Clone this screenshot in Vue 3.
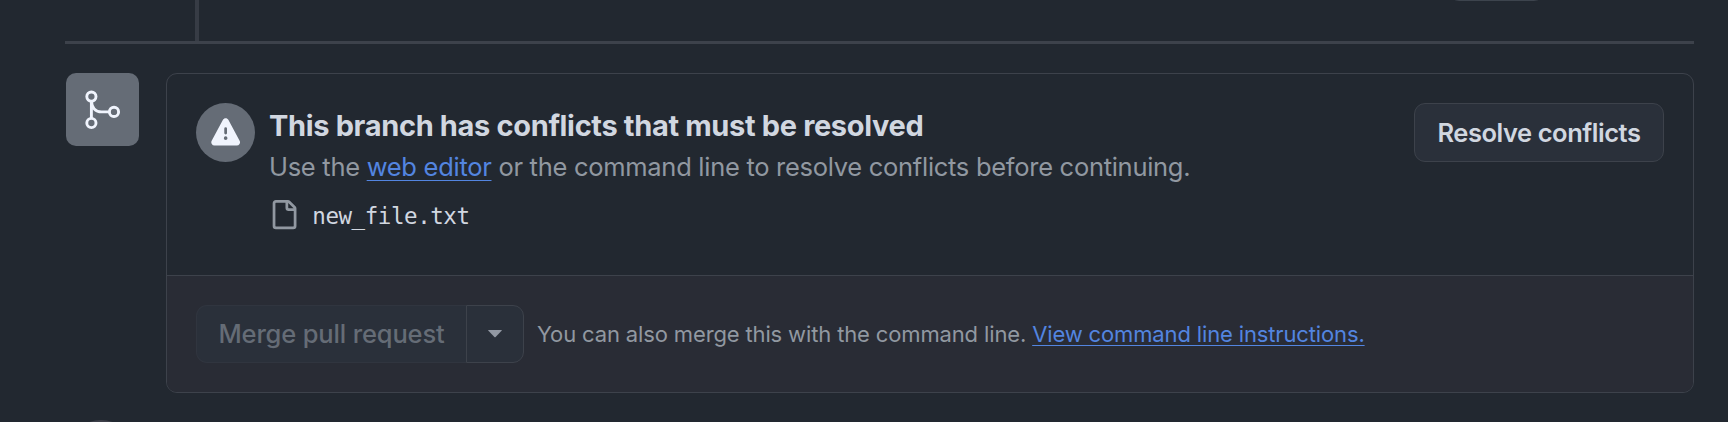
<script setup>
const file = 'new_file.txt'
</script>

<template>
  <main class="page">
    <div class="timeline">
      <span class="rail"></span>
      <span class="pill"></span>
    </div>
    <div class="row">
      <div class="tile">
        <svg viewBox="0 0 73 73" fill="none" stroke="#f0f4fd" stroke-width="2.9">
          <circle cx="25.4" cy="23.6" r="4.6" />
          <circle cx="25.4" cy="50" r="4.6" />
          <circle cx="48" cy="38.9" r="4.6" />
          <path d="M25.4 28.3V45.3M25.4 28.3C25.9 34.6 29.4 38.9 35.5 38.9H43.3" />
        </svg>
      </div>
      <section class="card">
        <div class="status">
          <div class="badge">
            <svg viewBox="0 0 16 16" fill="#f0f4fd"><path d="M6.457 1.047c.659-1.234 2.427-1.234 3.086 0l6.082 11.378A1.75 1.75 0 0 1 14.082 15H1.918a1.75 1.75 0 0 1-1.543-2.575ZM8 5a.75.75 0 0 0-.75.75v2.5a.75.75 0 0 0 1.5 0v-2.5A.75.75 0 0 0 8 5Zm1 6a1 1 0 1 0-2 0 1 1 0 0 0 2 0Z" /></svg>
          </div>
          <div class="info">
            <h3>This branch has conflicts that must be resolved</h3>
            <p class="hint">Use the <a>web editor</a> or the command line to resolve conflicts before continuing.</p>
            <div class="file">
              <svg viewBox="0 0 16 16" fill="#9198a1"><path d="M2 1.75C2 .784 2.784 0 3.75 0h6.586c.464 0 .909.184 1.237.513l2.914 2.914c.329.328.513.773.513 1.237v9.586A1.75 1.75 0 0 1 13.25 16h-9.5A1.75 1.75 0 0 1 2 14.25Zm1.75-.25a.25.25 0 0 0-.25.25v12.5c0 .138.112.25.25.25h9.5a.25.25 0 0 0 .25-.25V6h-2.75A1.75 1.75 0 0 1 9 4.25V1.5Zm6.75.062V4.25c0 .138.112.25.25.25h2.688l-.011-.013-2.914-2.914-.013-.011Z" /></svg>
              <code>{{ file }}</code>
            </div>
          </div>
          <button class="btn resolve">Resolve conflicts</button>
        </div>
        <div class="actions">
          <button class="btn merge">Merge pull request</button>
          <button class="btn caret" aria-label="Select merge method">
            <svg viewBox="0 0 14 8" fill="#9298a3"><path d="M.6 0h12.8q.8.1.2.8L7.6 7q-.6.6-1.2 0L.4.8Q-.2.1.6 0Z" /></svg>
          </button>
          <p class="note">You can also merge this with the command line. <a>View command line instructions.</a></p>
        </div>
      </section>
    </div>
    <span class="next"></span>
  </main>
</template>

<style>
body { margin: 0; background: #222830; }
</style>

<style scoped>
.page {
  box-sizing: border-box;
  position: relative;
  width: 1728px;
  height: 422px;
  padding: 0 34px 0 65px;
  overflow: hidden;
  background: #222830;
  color: #d1d7e0;
  font-family: Inter, "Liberation Sans", sans-serif;
}
.timeline {
  display: flex;
  height: 41px;
  border-bottom: 3px solid #3d424b;
}
.rail { width: 4px; height: 41px; margin-left: 130px; background: #373c45; }
.pill {
  box-sizing: border-box;
  width: 95px;
  height: 20px;
  margin: -19px 0 0 1250px;
  border: 1px solid #3d444d;
  border-radius: 10px;
}
.row { display: flex; align-items: flex-start; margin-top: 29px; padding-left: 1px; }
.tile { width: 73px; height: 73px; margin-right: 27px; border-radius: 10px; background: #656c76; }
.tile svg { display: block; width: 73px; height: 73px; }
.card {
  box-sizing: border-box;
  width: 1528px;
  height: 320px;
  overflow: hidden;
  border: 1px solid #3d424b;
  border-radius: 11px;
}
.status {
  box-sizing: border-box;
  display: flex;
  align-items: flex-start;
  height: 201px;
  padding: 29px;
}
.badge {
  display: flex;
  align-items: center;
  justify-content: center;
  flex: none;
  width: 59px;
  height: 59px;
  margin-right: 14px;
  border-radius: 50%;
  background: #656c76;
}
.badge svg { width: 29.3px; height: 29.3px; }
.info { flex: 1; white-space: nowrap; }
h3, p { margin: 0; }
h3 { font-size: 29px; line-height: 45px; font-weight: 700; letter-spacing: -0.34px; }
.hint { font-size: 25.5px; line-height: 38px; letter-spacing: -0.285px; color: #9198a1; }
a {
  color: #5385e0;
  text-decoration: underline 1px;
  text-underline-offset: 4px;
  text-decoration-skip-ink: none;
}
.file { display: flex; align-items: center; margin-top: 12px; height: 34px; }
.file svg { width: 29.3px; height: 29.3px; }
code {
  margin: 1px 0 0 14px;
  font: 22.5px/30px "DejaVu Sans Mono", "Liberation Mono", monospace;
  letter-spacing: -0.44px;
}
.btn {
  box-sizing: border-box;
  display: flex;
  align-items: center;
  justify-content: center;
  flex: none;
  padding: 0;
  border: 1px solid #3d424b;
  border-radius: 11px;
  background: #2a303a;
  color: #d1d7e0;
  font: 600 25.5px/36px Inter, "Liberation Sans", sans-serif;
  white-space: nowrap;
}
.resolve { width: 250px; height: 59px; letter-spacing: -0.45px; }
.actions {
  box-sizing: border-box;
  display: flex;
  align-items: center;
  height: 117px;
  padding: 0 29px;
  border-top: 1px solid #3d424b;
  background: #292c35;
}
.merge {
  width: 270px;
  height: 58px;
  border-color: #30353f;
  border-right: 0;
  border-radius: 11px 0 0 11px;
  color: #656c76;
  font-weight: 500;
  letter-spacing: -0.15px;
}
.caret { width: 58px; height: 58px; border-radius: 0 11px 11px 0; }
.caret svg { width: 14px; height: 8px; }
.note {
  margin-left: 13px;
  font-size: 22px;
  line-height: 30px;
  letter-spacing: -0.14px;
  color: #9198a1;
  white-space: nowrap;
}
.note a { text-underline-offset: 3px; }
.next {
  position: absolute;
  left: 66px;
  top: 420px;
  width: 70px;
  height: 70px;
  border-radius: 50%;
  background: #3d3f49;
}
</style>
